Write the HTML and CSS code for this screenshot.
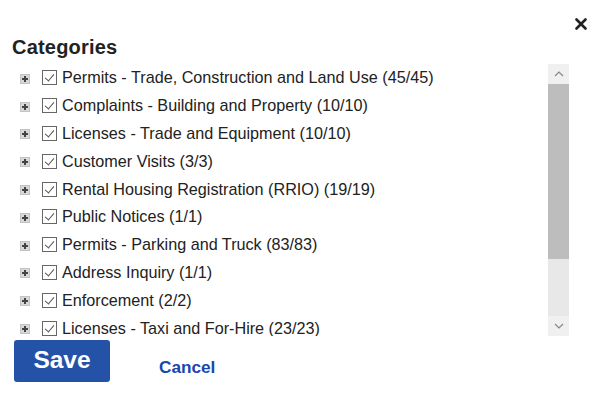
FILE: index.html
```html
<!DOCTYPE html>
<html>
<head>
<meta charset="utf-8">
<link rel="stylesheet" href="styles.css">
</head>
<body>
<div class="dialog">
  <div class="topbar">
    <button class="close" aria-label="Close">
      <svg width="12" height="12" viewBox="0 0 12 12"><path d="M1.5 1.5 L10.5 10.5 M10.5 1.5 L1.5 10.5" stroke="#222" stroke-width="2.6" stroke-linecap="round"/></svg>
    </button>
  </div>
  <h2 class="title">Categories</h2>
  <div class="listwrap">
    <ul class="list">
      <li class="row"><span class="exp"></span><span class="cb"></span><span class="label">Permits - Trade, Construction and Land Use (45/45)</span></li>
      <li class="row"><span class="exp"></span><span class="cb"></span><span class="label">Complaints - Building and Property (10/10)</span></li>
      <li class="row"><span class="exp"></span><span class="cb"></span><span class="label">Licenses - Trade and Equipment (10/10)</span></li>
      <li class="row"><span class="exp"></span><span class="cb"></span><span class="label">Customer Visits (3/3)</span></li>
      <li class="row"><span class="exp"></span><span class="cb"></span><span class="label">Rental Housing Registration (RRIO) (19/19)</span></li>
      <li class="row"><span class="exp"></span><span class="cb"></span><span class="label">Public Notices (1/1)</span></li>
      <li class="row"><span class="exp"></span><span class="cb"></span><span class="label">Permits - Parking and Truck (83/83)</span></li>
      <li class="row"><span class="exp"></span><span class="cb"></span><span class="label">Address Inquiry (1/1)</span></li>
      <li class="row"><span class="exp"></span><span class="cb"></span><span class="label">Enforcement (2/2)</span></li>
      <li class="row"><span class="exp"></span><span class="cb"></span><span class="label">Licenses - Taxi and For-Hire (23/23)</span></li>
    </ul>
    <div class="scrollbar">
      <div class="arrow"><svg width="10" height="6" viewBox="0 0 10 6"><path d="M1 5 L5 1 L9 5" fill="none" stroke="#888" stroke-width="1.2"/></svg></div>
      <div class="track"><div class="thumb"></div></div>
      <div class="arrow"><svg width="10" height="6" viewBox="0 0 10 6"><path d="M1 1 L5 5 L9 1" fill="none" stroke="#888" stroke-width="1.2"/></svg></div>
    </div>
  </div>
  <div class="actions">
    <button class="save">Save</button>
    <a class="cancel" href="#">Cancel</a>
  </div>
</div>
</body>
</html>
```
FILE: styles.css
```css
html, body {
  margin: 0;
  padding: 0;
  background: #fff;
}
body {
  font-family: "Liberation Sans", Arial, sans-serif;
  color: #222;
}
.dialog {
  width: 600px;
  height: 405px;
  box-sizing: border-box;
  padding: 0 0 0 12px;
}
.topbar {
  height: 35px;
  display: flex;
  justify-content: flex-end;
  align-items: flex-end;
  padding-right: 13px;
}
.close {
  border: 0;
  background: none;
  padding: 0;
  width: 12px;
  height: 12px;
  display: block;
  margin-bottom: 5px;
}
.close svg { display: block; }
.title {
  margin: 0;
  font-size: 20px;
  letter-spacing: 0.2px;
  font-weight: bold;
  line-height: 24px;
  height: 29px;
  color: #222;
}
.listwrap {
  display: flex;
  height: 273px;
  width: 557px;
  margin-top: -1px;
}
.list {
  list-style: none;
  margin: 0;
  padding: 0;
  flex: 1;
  overflow: hidden;
}
.row {
  display: flex;
  align-items: center;
  height: 27.8px;
  font-size: 16.2px;
  color: #222;
  position: relative;
  top: 1px;
}
.exp {
  width: 10px;
  height: 10px;
  box-sizing: border-box;
  margin-left: 8px;
  margin-right: 12px;
  background: linear-gradient(#444,#444) center/6px 2px no-repeat,
              linear-gradient(#444,#444) center/2px 6px no-repeat,
              #d8d8d8;
  border: 1px solid #c4c4c4;
  position: relative;
  top: 1px;
}
.cb {
  width: 15px;
  height: 15px;
  box-sizing: border-box;
  border: 1px solid #666;
  margin-right: 4px;
  position: relative;
  flex: none;
}
.cb::after {
  content: "";
  position: absolute;
  left: 4px;
  top: 1px;
  width: 4px;
  height: 8px;
  border-right: 1px solid #555;
  border-bottom: 1px solid #555;
  transform: rotate(40deg);
}
.label {
  white-space: nowrap;
  margin-left: 1px;
}
.scrollbar {
  width: 21px;
  background: #ececec;
  display: flex;
  flex-direction: column;
  margin-left: auto;
  flex: none;
  margin-top: 1px;
}
.arrow {
  height: 20px;
  display: flex;
  align-items: center;
  justify-content: center;
  background: #f0f0f0;
}
.track {
  flex: 1;
  background: #e8e8e8;
}
.thumb {
  height: 175px;
  background: #bdbdbd;
}
.actions {
  display: flex;
  align-items: flex-start;
  margin-top: 4px;
  padding-left: 2px;
}
.save {
  width: 96px;
  height: 42px;
  background: #2352a7;
  color: #fff;
  border: 0;
  border-radius: 3px;
  font-family: "Liberation Sans", Arial, sans-serif;
  font-weight: bold;
  font-size: 24.5px;
  line-height: 28px;
  padding: 0 0 3px;
}
.cancel {
  margin-left: 49px;
  margin-top: 17px;
  color: #1a46ad;
  font-weight: bold;
  font-size: 17.2px;
  line-height: 20px;
  text-decoration: none;
}
```
